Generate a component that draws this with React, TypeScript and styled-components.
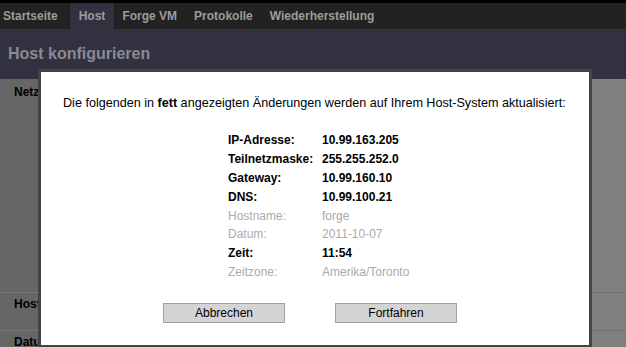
import React from "react";
import styled, { createGlobalStyle } from "styled-components";

const GlobalStyle = createGlobalStyle`
  html, body {
    margin: 0;
    padding: 0;
    background: #808080;
    overflow: hidden;
  }
  body {
    font-family: "Liberation Sans", Arial, sans-serif;
    font-size: 12px;
  }
`;

const Page = styled.div`
  position: relative;
  width: 626px;
  height: 347px;
  overflow: hidden;
  background: #ffffff;
`;

const TopNav = styled.nav`
  display: flex;
  height: 26px;
  border-top: 3px solid #000000;
  background: #222222;
`;

const Tab = styled.a<{ $active?: boolean; $first?: boolean }>`
  display: flex;
  align-items: center;
  padding: 0 8.5px;
  padding-left: ${(p) => (p.$first ? "3px" : "8.5px")};
  margin-right: ${(p) => (p.$first ? "4px" : "0")};
  background: ${(p) => (p.$active ? "#31313f" : "transparent")};
  color: #9c9c9c;
  font-weight: bold;
  font-size: 12px;
  text-decoration: none;
  white-space: nowrap;
`;

const TitleBar = styled.header`
  height: 50px;
  box-sizing: border-box;
  padding: 16px 8px 0;
  background: #31313f;
`;

const Title = styled.h1`
  margin: 0;
  font-size: 16px;
  line-height: 18px;
  font-weight: bold;
  color: #8a8a94;
`;

const Content = styled.div`
  position: relative;
`;

const Row = styled.div<{ $height: number }>`
  display: grid;
  grid-template-columns: 130px 1fr;
  height: ${(p) => p.$height}px;
  box-sizing: border-box;
`;

const RowLabel = styled.div<{ $first?: boolean }>`
  padding: ${(p) => (p.$first ? "6px" : "4px")} 14px 0;
  background: #cccccc;
  border-top: ${(p) => (p.$first ? "none" : "1px solid #eeeeee")};
  font-weight: bold;
  line-height: 14px;
  color: #000000;
  white-space: nowrap;
  overflow: hidden;
`;

const RowValue = styled.div<{ $first?: boolean }>`
  background: #ffffff;
  border-top: ${(p) => (p.$first ? "none" : "1px solid #e0e0e0")};
`;

const Overlay = styled.div`
  position: absolute;
  inset: 0;
  background: rgba(0, 0, 0, 0.5);
`;

const Dialog = styled.div`
  position: absolute;
  z-index: 2;
  left: 38px;
  top: 69px;
  width: 548px;
  height: 273px;
  border: 3px solid #444444;
  background: #ffffff;
  padding: 0;
  box-sizing: content-box;
  color: #000000;
`;

const DialogBody = styled.div`
  padding: 24px 22px 0;
`;

const Intro = styled.p`
  margin: 0;
  line-height: 14px;
  font-size: 12.6px;
  white-space: nowrap;
`;

const Summary = styled.div`
  display: grid;
  grid-template-columns: 94px auto;
  grid-auto-rows: 18.8px;
  align-items: center;
  margin: 21px 0 0 165px;
  width: 200px;
`;

const Cell = styled.div<{ $changed: boolean }>`
  font-weight: ${(p) => (p.$changed ? "bold" : "normal")};
  color: ${(p) => (p.$changed ? "#000000" : "#aaaaaa")};
  white-space: nowrap;
  line-height: 14px;
`;

const Actions = styled.div`
  display: flex;
  gap: 50px;
  margin: 22px 0 0 100px;
`;

const Button = styled.button`
  width: 122px;
  height: 20px;
  padding: 0;
  background: #d4d4d4;
  border: 1px solid #a0a0a0;
  font-family: "Liberation Sans", Arial, sans-serif;
  font-size: 12px;
  color: #000000;
  cursor: pointer;
`;

const tabs = ["Startseite", "Host", "Forge VM", "Protokolle", "Wiederherstellung"];

const changes: { label: string; value: string; changed: boolean }[] = [
  { label: "IP-Adresse:", value: "10.99.163.205", changed: true },
  { label: "Teilnetzmaske:", value: "255.255.252.0", changed: true },
  { label: "Gateway:", value: "10.99.160.10", changed: true },
  { label: "DNS:", value: "10.99.100.21", changed: true },
  { label: "Hostname:", value: "forge", changed: false },
  { label: "Datum:", value: "2011-10-07", changed: false },
  { label: "Zeit:", value: "11:54", changed: true },
  { label: "Zeitzone:", value: "Amerika/Toronto", changed: false },
];

export default function App() {
  return (
    <Page>
      <GlobalStyle />
      <TopNav>
        {tabs.map((t, i) => (
          <Tab key={t} href="#" $first={i === 0} $active={t === "Host"}>
            {t}
          </Tab>
        ))}
      </TopNav>
      <TitleBar>
        <Title>Host konfigurieren</Title>
      </TitleBar>
      <Content>
        <Row $height={213}>
          <RowLabel $first>Netzwerk</RowLabel>
          <RowValue $first />
        </Row>
        <Row $height={38}>
          <RowLabel>Hostname</RowLabel>
          <RowValue />
        </Row>
        <Row $height={40}>
          <RowLabel>Datum/Zeit</RowLabel>
          <RowValue />
        </Row>
        <Overlay />
      </Content>
      <Dialog>
        <DialogBody>
          <Intro>
            Die folgenden in <b>fett</b> angezeigten Änderungen werden auf
            Ihrem Host-System aktualisiert:
          </Intro>
          <Summary>
            {changes.map((c) => (
              <React.Fragment key={c.label}>
                <Cell $changed={c.changed}>{c.label}</Cell>
                <Cell $changed={c.changed}>{c.value}</Cell>
              </React.Fragment>
            ))}
          </Summary>
          <Actions>
            <Button>Abbrechen</Button>
            <Button>Fortfahren</Button>
          </Actions>
        </DialogBody>
      </Dialog>
    </Page>
  );
}
